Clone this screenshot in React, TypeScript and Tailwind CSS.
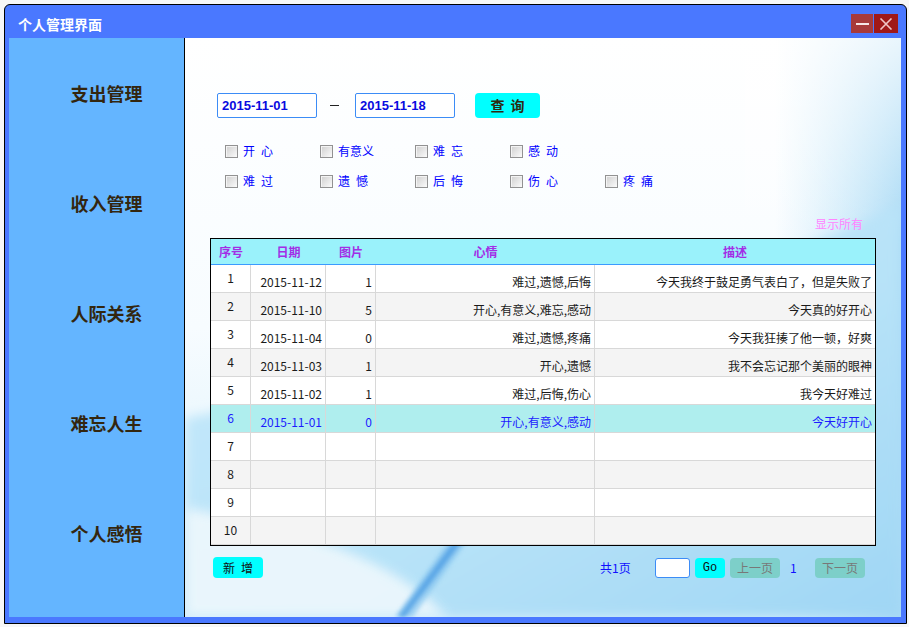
import React from "react";

type Row = {
  id: number;
  date: string;
  pics: string;
  mood: string;
  desc: string;
};

const rows: Row[] = [
  { id: 1, date: "2015-11-12", pics: "1", mood: "难过,遗憾,后悔", desc: "今天我终于鼓足勇气表白了，但是失败了" },
  { id: 2, date: "2015-11-10", pics: "5", mood: "开心,有意义,难忘,感动", desc: "今天真的好开心" },
  { id: 3, date: "2015-11-04", pics: "0", mood: "难过,遗憾,疼痛", desc: "今天我狂揍了他一顿，好爽" },
  { id: 4, date: "2015-11-03", pics: "1", mood: "开心,遗憾", desc: "我不会忘记那个美丽的眼神" },
  { id: 5, date: "2015-11-02", pics: "1", mood: "难过,后悔,伤心", desc: "我今天好难过" },
  { id: 6, date: "2015-11-01", pics: "0", mood: "开心,有意义,感动", desc: "今天好开心" },
  { id: 7, date: "", pics: "", mood: "", desc: "" },
  { id: 8, date: "", pics: "", mood: "", desc: "" },
  { id: 9, date: "", pics: "", mood: "", desc: "" },
  { id: 10, date: "", pics: "", mood: "", desc: "" },
];

const menu = ["支出管理", "收入管理", "人际关系", "难忘人生", "个人感悟"];

const moodsTop = ["开 心", "有意义", "难 忘", "感 动"];
const moodsBottom = ["难 过", "遗 憾", "后 悔", "伤 心", "疼 痛"];

const SELECTED = 6;

function Check({ label }: { label: string }) {
  const parts = label.split(" ");
  return (
    <div className="flex items-center w-[95px] shrink-0">
      <span className="w-[13px] h-[13px] shrink-0 border border-[#929292] bg-gradient-to-br from-[#cfcfcf] to-[#fbfbfb] shadow-[inset_1px_1px_0_#f4f4f4]" />
      <span className="ml-[5px] flex text-[12px] leading-none text-[#0000ff]">
        {parts.map((p, i) => (
          <span key={i} className={i > 0 ? "ml-[6px]" : ""}>
            {p}
          </span>
        ))}
      </span>
    </div>
  );
}

function ContentBackground() {
  return (
    <svg className="absolute inset-0" width="716" height="579" viewBox="0 0 716 579">
      <defs>
        <linearGradient id="base" x1="0" y1="0" x2="0" y2="1">
          <stop offset="0" stopColor="#ffffff" />
          <stop offset="0.5" stopColor="#f7fcff" />
          <stop offset="1" stopColor="#d6effb" />
        </linearGradient>
        <linearGradient id="edge" x1="0" y1="0" x2="1" y2="0">
          <stop offset="0" stopColor="#bfe5f9" stopOpacity="0" />
          <stop offset="1" stopColor="#a9daf5" stopOpacity="1" />
        </linearGradient>
        <linearGradient id="fadeTop" x1="0" y1="0" x2="0" y2="1">
          <stop offset="0" stopColor="#ffffff" stopOpacity="0.75" />
          <stop offset="0.35" stopColor="#ffffff" stopOpacity="0" />
        </linearGradient>
        <linearGradient id="swoosh" x1="0" y1="0" x2="1" y2="1">
          <stop offset="0" stopColor="#c9eafb" />
          <stop offset="0.6" stopColor="#b6e2f8" />
          <stop offset="1" stopColor="#9fd6f4" />
        </linearGradient>
        <filter id="soft" x="-20%" y="-20%" width="140%" height="140%">
          <feGaussianBlur stdDeviation="6" />
        </filter>
        <filter id="soft2" x="-20%" y="-20%" width="140%" height="140%">
          <feGaussianBlur stdDeviation="2" />
        </filter>
      </defs>
      <rect width="716" height="579" fill="url(#base)" />
      <rect x="590" y="0" width="126" height="579" fill="url(#edge)" />
      <rect x="560" y="0" width="156" height="579" fill="url(#fadeTop)" />
      <path d="M716,168 C620,210 420,300 0,380 L0,579 L716,579 Z" fill="url(#swoosh)" filter="url(#soft)" />
      <path d="M0,470 C110,490 210,520 262,579 L0,579 Z" fill="#f2f9fd" opacity="0.85" filter="url(#soft)" />
      <path d="M336,400 L356,400 L228,579 L210,579 Z" fill="#8cc8f0" opacity="0.75" filter="url(#soft2)" />
      <path d="M330,420 L340,420 L220,579 L213,579 Z" fill="#4f9fe4" opacity="0.85" filter="url(#soft2)" />
    </svg>
  );
}

export default function App() {
  return (
    <div
      className="w-[909px] h-[627px] bg-[#f7f7f7] pl-[4px] pt-[4px] overflow-hidden"
      style={{ fontFamily: '"Noto Sans CJK SC", "Noto Sans", sans-serif' }}
    >
      <div className="w-[903px] h-[620px] border border-black rounded-t-[6px] bg-[#4a78ff] flex flex-col">
        {/* title bar */}
        <div className="h-[33px] flex items-start shrink-0">
          <div className="pl-[13px] pt-[10px] text-[14px] leading-[18px] font-bold text-white">个人管理界面</div>
          <div className="ml-auto mr-[8px] mt-[9px] flex">
            <div className="w-[22px] h-[19px] bg-[#a83a3a] flex items-center justify-center">
              <span className="block w-[13px] h-[2px] bg-[#f6e6e6]" />
            </div>
            <div className="ml-px w-[24px] h-[19px] bg-[#a01818] flex items-center justify-center">
              <svg width="14" height="12" viewBox="0 0 14 12">
                <path d="M1.5,0.5 L12.5,11.5 M12.5,0.5 L1.5,11.5" stroke="#f0c4c4" strokeWidth="1.6" fill="none" />
              </svg>
            </div>
          </div>
        </div>

        {/* body */}
        <div className="h-[579px] flex pl-[4px] shrink-0">
          <div className="w-[176px] h-full bg-[#64b5ff] border-r border-black flex flex-col items-center pt-[43px] gap-[86px] pl-[20px]">
            {menu.map((m) => (
              <div key={m} className="h-[24px] text-[18px] leading-[24px] font-bold text-[#33260f]">
                {m}
              </div>
            ))}
          </div>

          <div className="relative w-[716px] h-full overflow-hidden">
            <ContentBackground />
            <div className="relative pl-[25px] pt-[55px] flex flex-col">
              {/* date query row */}
              <div className="flex items-center h-[25px] ml-[7px]">
                <div
                  className="w-[100px] h-[25px] border border-[#3c8cf6] rounded-[2px] bg-white flex items-center pl-[4px] text-[13px] font-bold text-[#0a0ae0]"
                  style={{ fontFamily: '"Liberation Sans", sans-serif' }}
                >
                  2015-11-01
                </div>
                <div className="w-[9px] h-[1.5px] bg-[#222] ml-[13px]" />
                <div
                  className="ml-[16px] w-[100px] h-[25px] border border-[#3c8cf6] rounded-[2px] bg-white flex items-center pl-[4px] text-[13px] font-bold text-[#0a0ae0]"
                  style={{ fontFamily: '"Liberation Sans", sans-serif' }}
                >
                  2015-11-18
                </div>
                <div className="ml-[20px] w-[65px] h-[25px] rounded-[4px] bg-[#00ffff] flex items-center justify-center text-[14px] font-bold text-[#2e2a10]">
                  <span>查</span>
                  <span className="ml-[6px]">询</span>
                </div>
              </div>

              {/* mood checkboxes */}
              <div className="mt-[23px] ml-[15px] flex h-[20px] items-center">
                {moodsTop.map((m) => (
                  <Check key={m} label={m} />
                ))}
              </div>
              <div className="mt-[10px] ml-[15px] flex h-[20px] items-center">
                {moodsBottom.map((m) => (
                  <Check key={m} label={m} />
                ))}
              </div>

              <div className="mt-[25px] w-[666px] h-[16px] flex justify-end pr-[13px] text-[12px] leading-[16px] text-[#ff84ff]">
                显示所有
              </div>

              {/* table */}
              <div className="mt-[6px] w-[666px] border border-black bg-white text-[12px]">
                <div className="h-[26px] flex bg-[#9af2fb] border-b border-[#3b9bff] font-bold text-[#a22ee6]">
                  <div className="w-[40px] flex items-center justify-center">序号</div>
                  <div className="w-[75px] flex items-center justify-center">日期</div>
                  <div className="w-[50px] flex items-center justify-center">图片</div>
                  <div className="w-[219px] flex items-center justify-center">心情</div>
                  <div className="flex-1 flex items-center justify-center">描述</div>
                </div>
                {rows.map((r) => {
                  const sel = r.id === SELECTED;
                  const bg = sel ? "bg-[#afeeee]" : r.id % 2 === 0 ? "bg-[#f4f4f4]" : "bg-white";
                  const fg = sel ? "text-[#1c1cff]" : "text-[#1a1a1a]";
                  return (
                    <div key={r.id} className={`h-[28px] flex border-b border-[#d8d8d8] leading-[16px] ${bg} ${fg}`}>
                      <div className="w-[40px] border-r border-[#d8d8d8] flex items-center justify-center pb-[1px]">{r.id}</div>
                      <div className="w-[75px] border-r border-[#d8d8d8] flex items-end justify-end pr-[3px] pb-[2px]">{r.date}</div>
                      <div className="w-[50px] border-r border-[#d8d8d8] flex items-end justify-end pr-[3px] pb-[2px]">{r.pics}</div>
                      <div className="w-[219px] border-r border-[#d8d8d8] flex items-end justify-end pr-[3px] pb-[2px]">{r.mood}</div>
                      <div className="flex-1 flex items-end justify-end pr-[3px] pb-[2px]">{r.desc}</div>
                    </div>
                  );
                })}
              </div>

              {/* bottom bar */}
              <div className="mt-[11px] h-[21px] flex items-center text-[12px]">
                <div className="ml-[3px] w-[50px] h-[21px] rounded-[4px] bg-[#00ffff] flex items-center justify-center text-[#111]">
                  <span>新</span>
                  <span className="ml-[6px]">增</span>
                </div>
                <div className="ml-[337px] w-[31px] text-[#1010ff] leading-none">共1页</div>
                <div className="ml-[24px] w-[35px] h-[20px] bg-white border border-[#3c8cf6] rounded-[3px]" />
                <div
                  className="ml-[5px] w-[30px] h-[20px] rounded-[4px] bg-[#00ffff] flex items-center justify-center text-[12px] text-[#111]"
                  style={{ fontFamily: '"Liberation Mono", monospace' }}
                >
                  Go
                </div>
                <div className="ml-[5px] w-[50px] h-[20px] rounded-[4px] bg-[#7dcfc9] flex items-center justify-center text-[#787878]">
                  上一页
                </div>
                <div className="ml-[10px] w-[7px] text-[#1010ff] leading-none">1</div>
                <div className="ml-[18px] w-[50px] h-[20px] rounded-[4px] bg-[#7dcfc9] flex items-center justify-center text-[#787878]">
                  下一页
                </div>
              </div>
            </div>
          </div>
        </div>
      </div>
    </div>
  );
}
